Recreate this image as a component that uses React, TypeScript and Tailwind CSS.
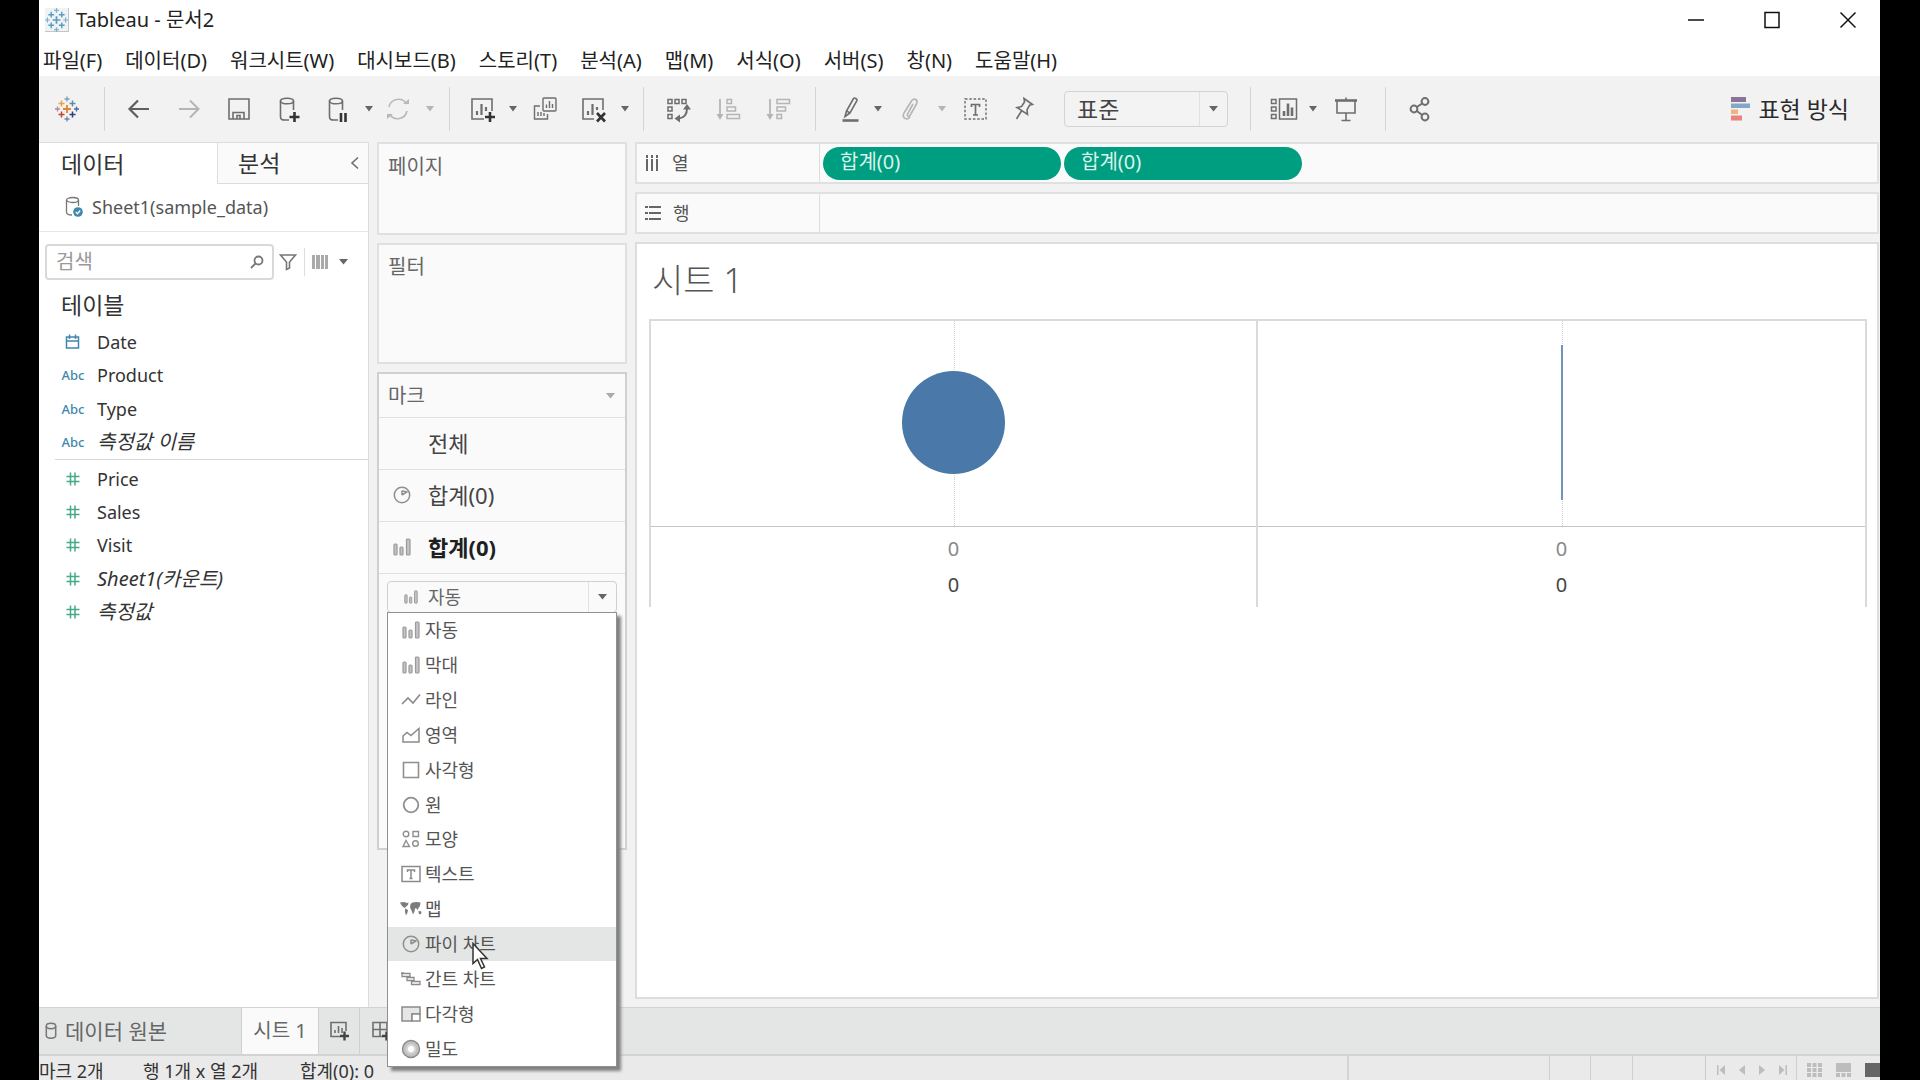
import { useState } from "react";
import type { ReactNode } from "react";

const FONT = "font-['Noto_Sans','Noto_Sans_CJK_KR',sans-serif]";

function Svg({ w = 26, h = 28, color = "#6e6e6e", sw = 1.6, children }: { w?: number; h?: number; color?: string; sw?: number; children: ReactNode }) {
  return (
    <svg width={w} height={h} viewBox={`0 0 ${w} ${h}`} fill="none" stroke={color} strokeWidth={sw} className="shrink-0" aria-hidden="true">
      {children}
    </svg>
  );
}

function Caret({ color = "#666", w = 8 }: { color?: string; w?: number }) {
  return (
    <svg width={w} height="6" viewBox="0 0 8 6" preserveAspectRatio="none" className="shrink-0" aria-hidden="true">
      <path d="M0 0h8L4 5.500z" fill={color} />
    </svg>
  );
}

function Logo({ mono = false }: { mono?: boolean }) {
  const c = mono
    ? ["#5b9bbf", "#5b9bbf", "#5b9bbf", "#5b9bbf", "#5b9bbf", "#7fb0cc", "#7fb0cc", "#7fb0cc", "#7fb0cc"]
    : ["#e8822e", "#e9a14a", "#5c8ea6", "#c4453c", "#27427c", "#7aa0b8", "#b48aa0", "#4a6a9a", "#6a86ad"];
  return (
    <svg width="24" height="26" viewBox="0 0 24 26" fill="none" aria-hidden="true">
      <path d="M12 9v8M8 13h8" stroke={c[0]} strokeWidth="1.8" />
      <path d="M6.500 4.500v6M3.500 7.500h6" stroke={c[1]} strokeWidth="1.500" />
      <path d="M17.500 4.500v6M14.500 7.500h6" stroke={c[2]} strokeWidth="1.500" />
      <path d="M6.500 15.500v6M3.500 18.500h6" stroke={c[3]} strokeWidth="1.500" />
      <path d="M17.500 15.500v6M14.500 18.500h6" stroke={c[4]} strokeWidth="1.500" />
      <path d="M12 0.500v5M9.500 3h5" stroke={c[5]} strokeWidth="1.300" />
      <path d="M2.500 10.500v5M0 13h5" stroke={c[6]} strokeWidth="1.300" />
      <path d="M21.500 10.500v5M19 13h5" stroke={c[7]} strokeWidth="1.300" />
      <path d="M12 20.500v5M9.500 23h5" stroke={c[8]} strokeWidth="1.300" />
    </svg>
  );
}

const cylinder = "M13 25H8.500C6 25 4.500 24 4.500 22V5.500";
const icons = {
  back: (
    <Svg color="#5f5f5f" sw={2.2}><path d="M23 14H4M12 5.500 3.500 14l8.500 8.500" /></Svg>
  ),
  forward: (
    <Svg color="#b5b5b5" sw={2}><path d="M3 14h19M14 5.500l8.500 8.500-8.500 8.500" /></Svg>
  ),
  save: (
    <Svg><path d="M3 4h20v20H3zM7 24v-6.500h11V24M11 24v-3.500h3V24" /></Svg>
  ),
  dbPlus: (
    <Svg><ellipse cx="11" cy="6" rx="6.500" ry="2.800" /><path d={cylinder} /><path d="M17.500 6v9" /><path d="M18.500 17v10M13.500 22h10" stroke="#333" strokeWidth="2.600" /></Svg>
  ),
  dbPause: (
    <Svg><ellipse cx="11" cy="6" rx="6.500" ry="2.800" /><path d={cylinder} /><path d="M17.500 6v9" /><path d="M16 18v9M20.500 18v9" stroke="#333" strokeWidth="2.600" /></Svg>
  ),
  refresh: (
    <Svg color="#b9b9b9"><path d="M4 12a9.500 9.500 0 0 1 17.500-3M22 16a9.500 9.500 0 0 1-17.500 3" /><path d="M18 9h6v-5zM8 19H2v5z" fill="#b9b9b9" stroke="none" /></Svg>
  ),
  newSheet: (
    <Svg><path d="M15 24H3V4h20v12" /><path d="M8 20v-4M12.500 20V9M17 16v-4" strokeWidth="2.200" /><path d="M21 17v10M16 22h10" stroke="#333" strokeWidth="2.600" /></Svg>
  ),
  duplicate: (
    <Svg sw={1.4}><rect x="11" y="3" width="13" height="13" rx="1" /><path d="M8 11H2.500v13h13v-5M14.500 13V9.500M17.500 13V6M20.500 13V9M6 21v-4M9 21v-4M12 21v-3" /></Svg>
  ),
  clearSheet: (
    <Svg><path d="M14 24H3V4h20v11" /><path d="M8 20v-4M12.500 20V9M17 15v-3" strokeWidth="2.200" /><path d="M17 18l8 8.500M25 18l-8 8.500" stroke="#333" strokeWidth="2.600" /></Svg>
  ),
  swap: (
    <Svg sw={1.5}><path d="M3 4.500h4v4H3zM10 4.500h4v4h-4zM17 4.500h4v4h-4zM3 12h4v4H3zM3 19.500h4v4H3z" /><path d="M22 13.500c0 6-3 9.500-8.500 10" strokeWidth="2" /><path d="M22 9l4 5.500h-8zM9.500 23.500l5.500-4v8z" fill="#6e6e6e" stroke="none" /></Svg>
  ),
  sortAsc: (
    <Svg color="#b5b5b5" sw={1.5}><path d="M5 4v17" strokeWidth="1.800" /><path d="M1.500 19h7L5 25z" fill="#b5b5b5" stroke="none" /><path d="M12 4.500h4.500v4H12zM12 12h8.500v4H12zM12 19.500h12.500v4H12z" /></Svg>
  ),
  sortDesc: (
    <Svg color="#b5b5b5" sw={1.5}><path d="M5 4v17" strokeWidth="1.800" /><path d="M1.500 19h7L5 25z" fill="#b5b5b5" stroke="none" /><path d="M12 4.500h12.500v4H12zM12 12h8.500v4H12zM12 19.500h4.500v4H12z" /></Svg>
  ),
  highlighter: (
    <Svg><path d="M16.500 3.500c1-1 4 .5 3.500 2L13 18l-3.500-2zM9.500 16l-1.500 5.500 5-3.500" /><path d="M5.500 25.500h16" strokeWidth="2.600" /></Svg>
  ),
  clip: (
    <Svg color="#b5b5b5"><path d="M16 9l-5.500 10c-1 2 1.500 3.500 2.500 1.500l6.500-11.500c2-4-2.500-7-5-3L7 18c-2.500 5 3 8 6 4" /></Svg>
  ),
  label: (
    <Svg sw={1.4}><rect x="3" y="4" width="21" height="20" strokeDasharray="2.500 1.800" /><path d="M9.500 12V9.500h8V12M13.500 9.500V20M11 20h5" strokeWidth="1.700" /></Svg>
  ),
  pin: (
    <Svg><path d="M13 3.500l8.500 6-3 .8-2.500 4.500.5 4.700L6 12.500l4.500-1L13.500 7zM10.500 16L5.500 24" /></Svg>
  ),
  cards: (
    <Svg w={28} sw={1.5}><path d="M1.500 4.500h4.500v4H1.500zM1.500 12h4.500v4H1.500zM1.500 19.500h4.500v4H1.500zM9.500 4h17v20h-17z" /><path d="M14 21v-5M18 21V8.500M22 21v-8.500" strokeWidth="2.600" /></Svg>
  ),
  present: (
    <Svg><path d="M2 5.500h22" strokeWidth="2.600" /><path d="M4 6v12h18V6M13 18v7.500M8.500 25.500h9M13 2.500v3" /></Svg>
  ),
  share: (
    <Svg sw={2}><circle cx="6" cy="14" r="3.400" /><circle cx="17" cy="6.500" r="3.400" /><circle cx="17" cy="22" r="3.400" /><path d="M8.800 12l5.400-3.500M8.800 16l5.400 4" /></Svg>
  ),
};

function ToolButton({ w, label, children }: { w: string; label: string; children: ReactNode }) {
  return (
    <button type="button" aria-label={label} className={`flex h-11 items-center justify-center ${w}`}>
      {children}
    </button>
  );
}

function Sep() {
  return <div className="h-11 w-px shrink-0 bg-[#d4d6d6]" />;
}

function Toolbar() {
  return (
    <div className="flex h-[66px] shrink-0 items-center bg-[#f2f2f2]">
      <div className="flex pr-[9px]"><ToolButton w="w-14" label="시작 페이지"><Logo /></ToolButton></div>
      <Sep />
      <div className="flex pl-[9px] pr-2">
        <ToolButton w="w-[50px]" label="실행 취소">{icons.back}</ToolButton>
        <ToolButton w="w-[50px]" label="다시 실행">{icons.forward}</ToolButton>
        <ToolButton w="w-[50px]" label="저장">{icons.save}</ToolButton>
        <ToolButton w="w-[50px]" label="새 데이터 원본">{icons.dbPlus}</ToolButton>
        <ToolButton w="w-[47px]" label="자동 업데이트 일시 중지">{icons.dbPause}</ToolButton>
        <ToolButton w="w-4" label="업데이트 옵션"><Caret /></ToolButton>
        <ToolButton w="w-[42px]" label="업데이트 실행">{icons.refresh}</ToolButton>
        <ToolButton w="w-[22px]" label="실행 옵션"><Caret color="#b5b5b5" /></ToolButton>
      </div>
      <Sep />
      <div className="flex pl-2 pr-2.5">
        <ToolButton w="w-[47px]" label="새 워크시트">{icons.newSheet}</ToolButton>
        <ToolButton w="w-4" label="새로 만들기 옵션"><Caret /></ToolButton>
        <ToolButton w="w-12" label="복제">{icons.duplicate}</ToolButton>
        <ToolButton w="w-12" label="시트 지우기">{icons.clearSheet}</ToolButton>
        <ToolButton w="w-4" label="지우기 옵션"><Caret /></ToolButton>
      </div>
      <Sep />
      <div className="flex pl-[9px] pr-3">
        <ToolButton w="w-[50px]" label="행과 열 바꾸기">{icons.swap}</ToolButton>
        <ToolButton w="w-[50px]" label="오름차순 정렬">{icons.sortAsc}</ToolButton>
        <ToolButton w="w-[50px]" label="내림차순 정렬">{icons.sortDesc}</ToolButton>
      </div>
      <Sep />
      <div className="flex items-center pl-[14px] pr-[22px]">
        <ToolButton w="w-10" label="하이라이트">{icons.highlighter}</ToolButton>
        <ToolButton w="w-4" label="하이라이트 옵션"><Caret /></ToolButton>
        <ToolButton w="w-12" label="그룹 구성원">{icons.clip}</ToolButton>
        <ToolButton w="w-4" label="그룹 옵션"><Caret color="#b5b5b5" /></ToolButton>
        <ToolButton w="w-[50px]" label="마크 레이블 표시">{icons.label}</ToolButton>
        <ToolButton w="w-12" label="축 고정">{icons.pin}</ToolButton>
        <div className="relative ml-4 flex h-9 w-[164px] rounded-sm border border-[#d2d4d4] bg-[#f3f3f3]">
          <select aria-label="맞춤" className="h-full w-full appearance-none pl-3 text-[23px] leading-8 text-[#444] outline-none">
            <option>표준</option>
            <option>너비 맞추기</option>
            <option>전체 보기</option>
          </select>
          <div className="pointer-events-none absolute inset-y-0 right-0 flex w-7 items-center justify-center border-l border-[#e0e0e0]"><Caret w={9} /></div>
        </div>
      </div>
      <Sep />
      <div className="flex pl-3 pr-[14px]">
        <ToolButton w="w-[42px]" label="카드 표시">{icons.cards}</ToolButton>
        <ToolButton w="w-4" label="카드 옵션"><Caret /></ToolButton>
        <ToolButton w="w-[50px]" label="프레젠테이션 모드">{icons.present}</ToolButton>
      </div>
      <Sep />
      <div className="flex px-2"><ToolButton w="w-[54px]" label="공유">{icons.share}</ToolButton></div>
      <button type="button" className="ml-auto mr-[31px] flex items-center gap-2 text-[23px] leading-8 text-[#2b2b2b]">
        <svg width="19" height="24" viewBox="0 0 19 24" aria-hidden="true">
          <path d="M0 0h15v5H0z" fill="#8a7596" />
          <path d="M0 6.500h19v4.500H0z" fill="#84a7c9" />
          <path d="M0 12.500h7v4.500H0z" fill="#f3b27a" />
          <path d="M0 18.500h11v5H0z" fill="#e9837e" />
        </svg>
        표현 방식
      </button>
    </div>
  );
}

const menus = ["파일(F)", "데이터(D)", "워크시트(W)", "대시보드(B)", "스토리(T)", "분석(A)", "맵(M)", "서식(O)", "서버(S)", "창(N)", "도움말(H)"];

function FieldIcon({ kind }: { kind: string }) {
  if (kind === "date")
    return (
      <Svg w={16} h={16} color="#3f87ad" sw={1.5}><path d="M1.500 3h12v11h-12zM1.500 7h12M4.500 0.500V5M10.500 0.500V5" /></Svg>
    );
  if (kind === "abc") return <span className="text-[13px] font-medium leading-4 text-[#3f87ad]">Abc</span>;
  return (
    <Svg w={14} h={14} color="#45a98a" sw={1.5}><path d="M4.500 0.500v13M9 0.500v13M0.500 4.500h13M0.500 9.500h13" /></Svg>
  );
}

function Field({ kind, name, italic }: { kind: string; name: string; italic?: boolean }) {
  return (
    <li>
      <button type="button" className="flex h-full w-full items-center gap-1.5">
        <span className="flex w-9 justify-center">
          <FieldIcon kind={kind} />
        </span>
        <span className={`leading-6 text-[#333] ${italic ? "text-[20px] italic" : "text-[18px]"}`}>{name}</span>
      </button>
    </li>
  );
}

function DataPane() {
  return (
    <aside className="flex w-[330px] shrink-0 flex-col border-r border-t border-[#dcdede] bg-white">
      <div className="flex h-[41px] shrink-0">
        <button type="button" className="w-[178px] pl-[22px] text-left text-[23px] leading-9 text-[#333]">데이터</button>
        <div className="flex flex-1 items-center justify-between border-b border-l border-[#dcdede] bg-[#fafafa] pl-5 pr-2">
          <button type="button" className="text-[23px] leading-9 text-[#333]">분석</button>
          <button type="button" aria-label="데이터 패널 최소화"><Svg w={10} h={14}><path d="M8 1.500L2 7l6 5.500" /></Svg></button>
        </div>
      </div>
      <div className="flex h-12 shrink-0 items-center gap-2 border-b border-[#e6e6e6] pb-0.5 pl-[26px]">
        <svg width="19" height="22" viewBox="0 0 19 22" fill="none" stroke="#777" strokeWidth="1.300" aria-hidden="true">
          <ellipse cx="7.500" cy="4" rx="6" ry="2.500" />
          <path d="M1.500 4v12c0 2 2 3 5.500 3M13.500 4v6" />
          <circle cx="13" cy="16" r="4.800" fill="#3f87ad" stroke="none" />
          <path d="M10.800 16l1.700 1.700 2.700-3.200" stroke="#fff" />
        </svg>
        <span className="text-[18px] leading-6 text-[#555]">Sheet1(sample_data)</span>
      </div>
      <div className="mt-3 flex h-9 shrink-0 items-center pl-1.5">
        <label className="flex h-full w-[229px] items-center rounded-sm border-2 border-[#d8dada] bg-white pl-[9px] pr-2">
          <input type="text" placeholder="검색" aria-label="검색" className="min-w-0 flex-1 text-[20px] leading-7 outline-none placeholder:text-[#999]" />
          <Svg w={14} h={14} color="#777" sw={1.8}><circle cx="8.500" cy="5.500" r="4" /><path d="M5.500 8.500l-4.500 4.500" /></Svg>
        </label>
        <button type="button" aria-label="필터" className="ml-[5px]"><Svg w={18} h={18} color="#777"><path d="M1.500 2h15l-6 7v6l-3 1.500V9z" /></Svg></button>
        <div className="mx-[7px] h-7 w-px bg-[#ddd]" />
        <button type="button" aria-label="보기 옵션" className="flex items-center gap-2.5">
          <svg width="17" height="14" viewBox="0 0 17 14" aria-hidden="true"><path d="M0 0h3v14H0zM4 0h4v14H4zM9 0h3v14H9zM13 0h3v14h-3z" fill="#aaa" /></svg>
          <Caret color="#666" w={9} />
        </button>
      </div>
      <h2 className="ml-[22px] mt-[7px] text-[23px] leading-9 text-[#333]">테이블</h2>
      <ul className="ml-4 mt-0.5 grid h-[135px] shrink-0 grid-rows-4 border-b border-[#d8d8d8]">
        <Field kind="date" name="Date" />
        <Field kind="abc" name="Product" />
        <Field kind="abc" name="Type" />
        <Field kind="abc" name="측정값 이름" italic />
      </ul>
      <ul className="ml-4 mt-0.5 grid h-[167px] shrink-0 grid-rows-5">
        <Field kind="num" name="Price" />
        <Field kind="num" name="Sales" />
        <Field kind="num" name="Visit" />
        <Field kind="num" name="Sheet1(카운트)" italic />
        <Field kind="num" name="측정값" italic />
      </ul>
    </aside>
  );
}

function Bars({ small = false }: { small?: boolean }) {
  return (
    <svg width={small ? 14 : 18} height={small ? 14 : 18} viewBox="0 0 18 18" fill="#c4c4c4" stroke="#9a9a9a" strokeWidth="1.200" className="shrink-0" aria-hidden="true">
      <rect x="1" y="6" width="3" height="11" rx="1" />
      <rect x="7" y="9" width="3" height="8" rx="1" />
      <rect x="13.500" y="1" width="3.500" height="16" rx="1" />
    </svg>
  );
}

function Pie() {
  return <Svg w={18} h={18} color="#8f8f8f" sw={1.5}><circle cx="9" cy="9" r="7.700" /><path d="M9 9V4.500M9 9l5.500-3.500M9 5c2 0 4 .5 5 1.500" /></Svg>;
}

const markTypes: { name: string; icon: ReactNode }[] = [
  { name: "자동", icon: <Bars /> },
  { name: "막대", icon: <Bars /> },
  { name: "라인", icon: <Svg w={20} h={16} color="#8a8a8a"><path d="M1 12l6-6 5 5 7-8.500" /></Svg> },
  { name: "영역", icon: <Svg w={18} h={16} color="#8a8a8a" sw={1.5}><path d="M1 15V9l4-3.500 4 3 4.500-4L17 1.500V15z" /></Svg> },
  { name: "사각형", icon: <Svg w={18} h={18} color="#8f8f8f"><path d="M1.500 1.500h15v15h-15z" /></Svg> },
  { name: "원", icon: <Svg w={18} h={18} color="#8f8f8f" sw={1.8}><circle cx="9" cy="9" r="7.300" /></Svg> },
  { name: "모양", icon: <Svg w={18} h={18} color="#8f8f8f" sw={1.4}><circle cx="4" cy="4" r="2.800" /><path d="M11 1.500h5.500v5H11zM4 10.500l3.500 6H1z" /><circle cx="13.500" cy="13.500" r="2.800" /></Svg> },
  { name: "텍스트", icon: <Svg w={20} h={18} color="#8a8a8a" sw={1.5}><path d="M1 1.500h18v15H1zM6.500 7V5h7v2M10 5v8.500M8.500 13.500h3" /></Svg> },
  {
    name: "맵",
    icon: (
      <svg width="22" height="16" viewBox="0 0 22 16" fill="#7d7d7d" className="shrink-0" aria-hidden="true">
        <path d="M0 1.500l4-.5 3 1 1.500-.5L8 4 6 5.500 5 7 3 6 1 3.500z" />
        <path d="M5 7.500l3 1.500-.5 2.500L6 14.500 5 11z" />
        <path d="M10.500 3l2-1.500 4-.5 4 .5-.5 3.500-1.500 2-1 2-1.500-2-1 .5-.5 3-1.500 3-1.500-4-1.500-3z" />
        <path d="M18 10.500l3-.5.5 2.500-2 1z" />
      </svg>
    ),
  },
  { name: "파이 차트", icon: <Pie /> },
  { name: "간트 차트", icon: <Svg w={20} h={14} color="#8a8a8a" sw={1.3}><path d="M1 1.500h8v3H1zM6 5.500h7v3H6zM10.500 9.500h8.500v3h-8.500zM0 1h3" /></Svg> },
  { name: "다각형", icon: <Svg w={20} h={16} color="#8a8a8a" sw={1.5}><path d="M1 1h18v7H11v7H1z" fill="#e6e6e6" /><path d="M11 8h8v7h-8z" fill="#fff" /></Svg> },
  { name: "밀도", icon: <Svg w={20} h={20} color="#8a8a8a" sw={1.4}><circle cx="10" cy="10" r="8.500" fill="#c2c2c2" /><circle cx="10" cy="10" r="4" fill="#fff" stroke="#d8d8d8" strokeWidth="2" /></Svg> },
];

function MarkTypePicker() {
  const [open, setOpen] = useState(true);
  const [picked, setPicked] = useState("자동");
  return (
    <div className="relative mx-2 mt-[7px]">
      <button type="button" aria-haspopup="listbox" aria-expanded={open} onClick={() => setOpen(!open)} className="flex h-8 w-full items-center rounded-sm border border-[#d0d0d0] bg-[#fafafa] pl-4 text-[18px] leading-6 text-[#666]">
        <Bars small />
        <span className="ml-2.5">{picked}</span>
        <span className="ml-auto flex h-full w-7 items-center justify-center border-l border-[#e2e2e2]"><Caret w={9} /></span>
      </button>
      {open && (
        <ul role="listbox" aria-label="마크 유형" className="absolute inset-x-0 top-[31px] z-10 flex h-[455px] flex-col border border-[#909090] bg-white shadow-[4px_4px_3px_#808080]">
          {markTypes.map((m) => (
            <li key={m.name} role="option" aria-selected={m.name === picked} className={`flex-1 ${m.name === "파이 차트" ? "bg-[#e4e6e6]" : ""}`}>
              <button type="button" onClick={() => setPicked(m.name)} className="flex h-full w-full items-center pl-3 text-[18px] leading-6 text-[#555]">
                <span className="flex w-[22px] justify-center">{m.icon}</span>
                <span className="ml-[3px]">{m.name}</span>
              </button>
            </li>
          ))}
        </ul>
      )}
    </div>
  );
}

function MarkRow({ icon, name, bold }: { icon?: ReactNode; name: string; bold?: boolean }) {
  return (
    <button type="button" className={`flex h-[52px] w-full items-center border-b border-[#dfe1e1] pb-0.5 pl-[14px] text-[22px] leading-8 ${bold ? "font-bold text-[#1f1f1f]" : "text-[#444]"}`}>
      <span className="w-[35px]">{icon}</span>
      {name}
    </button>
  );
}

function Cards() {
  return (
    <div className="ml-2 flex w-[250px] shrink-0 flex-col gap-2">
      <section className="h-[93px] shrink-0 border-2 border-[#dfe1e1] bg-[#fafafa] px-[9px] pt-[9px]">
        <h3 className="text-[20px] leading-7 text-[#666]">페이지</h3>
      </section>
      <section className="h-[121px] shrink-0 border-2 border-[#dfe1e1] bg-[#fafafa] px-[9px] pt-2">
        <h3 className="text-[20px] leading-7 text-[#666]">필터</h3>
      </section>
      <section className="h-[478px] shrink-0 border-2 border-[#cfd1d1] bg-[#fafafa]">
        <div className="flex h-[44px] items-center justify-between border-b border-[#dfe1e1] pl-[9px] pr-2.5">
          <h3 className="text-[20px] leading-7 text-[#666]">마크</h3>
          <Caret color="#aaa" w={9} />
        </div>
        <MarkRow name="전체" />
        <MarkRow name="합계(0)" icon={<Pie />} />
        <MarkRow name="합계(0)" icon={<Bars />} bold />
        <MarkTypePicker />
      </section>
    </div>
  );
}

function Shelf({ name, icon, pills }: { name: string; icon: ReactNode; pills: string[] }) {
  return (
    <div className="flex h-[42px] shrink-0 border-2 border-[#dfe1e1] bg-[#fafafa]">
      <div className="flex w-[183px] items-center gap-3 border-r border-[#dcdede] pl-2 text-[18px] leading-6 text-[#555]">
        {icon}
        {name}
      </div>
      <div className="flex items-center gap-[3px] pl-[3px]">
        {pills.map((p, i) => (
          <button type="button" key={i} className="h-[33px] w-[238px] rounded-full bg-[#009e80] pb-0.5 pl-[17px] text-left text-[20px] leading-7 text-[#d8f3ec]">
            {p}
          </button>
        ))}
      </div>
    </div>
  );
}

function Axis() {
  return (
    <div className="flex flex-col items-center pt-2 text-[20px] leading-7">
      <span className="text-[#8a8a8a]">0</span>
      <span className="mt-2 text-[#444]">0</span>
    </div>
  );
}

function Plot({ children }: { children: ReactNode }) {
  return (
    <div className="relative flex h-[206px] items-center justify-center border-b border-[#c4c4c4] pb-0.5">
      <div className="absolute inset-y-0 left-1/2 border-l border-dotted border-[#cfcfcf]" />
      {children}
    </div>
  );
}

function Sheet() {
  return (
    <div className="flex min-h-0 flex-1 flex-col border-2 border-[#dcdede] bg-white pl-3 pr-2.5 pt-3">
      <h1 className="pl-[3px] text-[34px] font-light leading-[48px] text-[#555]">시트 1</h1>
      <div className="mt-[15px] grid h-[288px] grid-cols-2 border-x-2 border-t-2 border-[#dadada]">
        <div className="border-r-2 border-[#dadada]">
          <Plot><div className="relative size-[103px] rounded-full bg-[#4a78a9]" /></Plot>
          <Axis />
        </div>
        <div>
          <Plot><div className="relative h-[155px] w-0.5 bg-[#7094bb]" /></Plot>
          <Axis />
        </div>
      </div>
    </div>
  );
}

function SheetTabs() {
  return (
    <div className="flex h-[49px] shrink-0 items-stretch border-b-2 border-t border-[#d2d4d4] bg-[#e4e6e6] text-[#666]">
      <button type="button" className="flex w-[203px] items-center gap-2 border-r border-[#cfd1d1] pl-1.5 text-[21px] leading-7">
        <Svg w={12} h={18} color="#777" sw={1.5}><ellipse cx="6" cy="4" rx="4.700" ry="2.700" /><path d="M1.300 4v9.500c0 3.500 9.400 3.500 9.400 0V4" /></Svg>
        데이터 원본
      </button>
      <button type="button" className="w-[76px] bg-[#fafafa] text-[20px] leading-7">시트 1</button>
      <button type="button" aria-label="새 워크시트" className="flex w-[42px] items-center justify-center border-x border-[#cfd1d1] pl-0.5">
        <Svg w={22} h={22}><path d="M11 16.500H2v-14h15V11M6 13v-3M9.500 13V6M13 13V8" /><path d="M15.500 11.500v9M11 16h9" stroke="#444" strokeWidth="2.400" /></Svg>
      </button>
      <button type="button" aria-label="새 대시보드" className="flex w-[42px] items-center justify-center pl-0.5">
        <Svg w={22} h={22}><path d="M11 16.500H2v-14h14V11M9 2.500v14M2 9.500h14" /><path d="M15.500 11.500v9M11 16h9" stroke="#444" strokeWidth="2.400" /></Svg>
      </button>
    </div>
  );
}

function StatusBar() {
  return (
    <footer className="flex h-6 shrink-0 items-end bg-[#eaeaea] text-[18px] leading-[18px] text-[#333]">
      <span className="w-[104px]">마크 2개</span>
      <span className="w-[157px]">행 1개 x 열 2개</span>
      <span>합계(0): 0</span>
      <div className="ml-auto flex h-full items-stretch">
        <div className="w-[202px] border-l-2 border-[#d4d4d4]" />
        <div className="w-[41px] border-l border-[#d0d0d0]" />
        <div className="w-[42px] border-l border-[#d0d0d0]" />
        <div className="w-[73px] border-l border-[#d0d0d0]" />
        <div className="flex w-[91px] items-center gap-[14px] border-l border-[#cacaca] pl-[11px] pt-1">
          <button type="button" aria-label="처음"><svg width="8" height="10" viewBox="0 0 8 10" fill="#bdbdbd" aria-hidden="true"><path d="M0 0h1.500v10H0zM8 0v10L2.500 5z" /></svg></button>
          <button type="button" aria-label="이전"><svg width="6" height="10" viewBox="0 0 6 10" fill="#bdbdbd" aria-hidden="true"><path d="M6 0v10L0 5z" /></svg></button>
          <button type="button" aria-label="다음"><svg width="6" height="10" viewBox="0 0 6 10" fill="#bdbdbd" aria-hidden="true"><path d="M0 0v10l6-5z" /></svg></button>
          <button type="button" aria-label="마지막"><svg width="8" height="10" viewBox="0 0 8 10" fill="#bdbdbd" aria-hidden="true"><path d="M6.500 0H8v10H6.500zM0 0v10l5.500-5z" /></svg></button>
        </div>
        <div className="flex items-center gap-[14px] border-l border-[#d0d0d0] pl-2.5 pt-1">
          <button type="button" aria-label="시트 정렬기"><svg width="15" height="14" viewBox="0 0 15 14" fill="#bdbdbd" aria-hidden="true"><path d="M0 0h4v4H0zM5.500 0h4v4h-4zM11 0h4v4h-4zM0 5h4v4H0zM5.500 5h4v4h-4zM11 5h4v4h-4zM0 10h4v4H0zM5.500 10h4v4h-4zM11 10h4v4h-4z" /></svg></button>
          <button type="button" aria-label="필름 스트립"><svg width="15" height="14" viewBox="0 0 15 14" fill="#bdbdbd" aria-hidden="true"><path d="M0 0h15v9H0zM0 10h4v4H0zM5.500 10h4v4h-4zM11 10h4v4h-4z" /></svg></button>
          <button type="button" aria-label="탭" className="h-3.5 w-[15px] bg-[#666]" />
        </div>
      </div>
    </footer>
  );
}

export default function App() {
  return (
    <div className={`h-screen overflow-hidden bg-black pl-[39px] pr-10 ${FONT}`}>
      <div className="relative flex h-full flex-col bg-[#f2f2f2]">
        <header className="shrink-0 bg-white">
          <div className="flex h-11 items-center pb-1 pl-1.5">
            <div className="flex size-6 items-center justify-center border-b border-r border-[#c4c4c4] bg-[#f0f3f5]"><Logo mono /></div>
            <span className="ml-[7px] text-[20px] leading-7 text-[#222]">Tableau - 문서2</span>
            <div className="ml-auto flex items-center gap-[60px] pr-6">
              <button type="button" aria-label="최소화"><Svg w={16} h={18} color="#111" sw={1.5}><path d="M0 9h16" /></Svg></button>
              <button type="button" aria-label="최대화"><Svg w={16} h={18} color="#111" sw={1.5}><path d="M1 1.500h14v15H1z" /></Svg></button>
              <button type="button" aria-label="닫기"><Svg w={16} h={18} color="#111" sw={1.5}><path d="M0.500 1.500l15 15M15.500 1.500l-15 15" /></Svg></button>
            </div>
          </div>
          <nav className="flex h-8 items-center gap-[23px] pl-1 pt-0.5 text-[20px] leading-7 text-[#222]">
            {menus.map((m) => (
              <button type="button" key={m}>{m}</button>
            ))}
          </nav>
        </header>
        <Toolbar />
        <div className="flex min-h-0 flex-1">
          <DataPane />
          <Cards />
          <main className="mb-2 ml-2 mr-px flex min-w-0 flex-1 flex-col gap-2">
            <Shelf
              name="열"
              icon={<svg width="15" height="16" viewBox="0 0 15 16" fill="#666" aria-hidden="true"><path d="M1 0h2v3H1zM6 0h2v3H6zM11 0h2v3h-2zM1 4h2v12H1zM6 4h2v12H6zM11 4h2v12h-2z" /></svg>}
              pills={["합계(0)", "합계(0)"]}
            />
            <Shelf
              name="행"
              icon={<svg width="16" height="14" viewBox="0 0 16 14" fill="#666" aria-hidden="true"><path d="M0 0h3v2H0zM0 6h3v2H0zM0 12h3v2H0zM4 0h12v2H4zM4 6h12v2H4zM4 12h12v2H4z" /></svg>}
              pills={[]}
            />
            <Sheet />
          </main>
        </div>
        <SheetTabs />
        <StatusBar />
        <svg width="18" height="28" viewBox="0 0 18 28" className="pointer-events-none absolute left-[433px] top-[942px] z-20" fill="#fff" stroke="#333" strokeWidth="1.500" aria-hidden="true">
          <path d="M1 1.500v20l4.500-4 4 9 3-1.500-4-8.500h6.500z" />
        </svg>
      </div>
    </div>
  );
}
